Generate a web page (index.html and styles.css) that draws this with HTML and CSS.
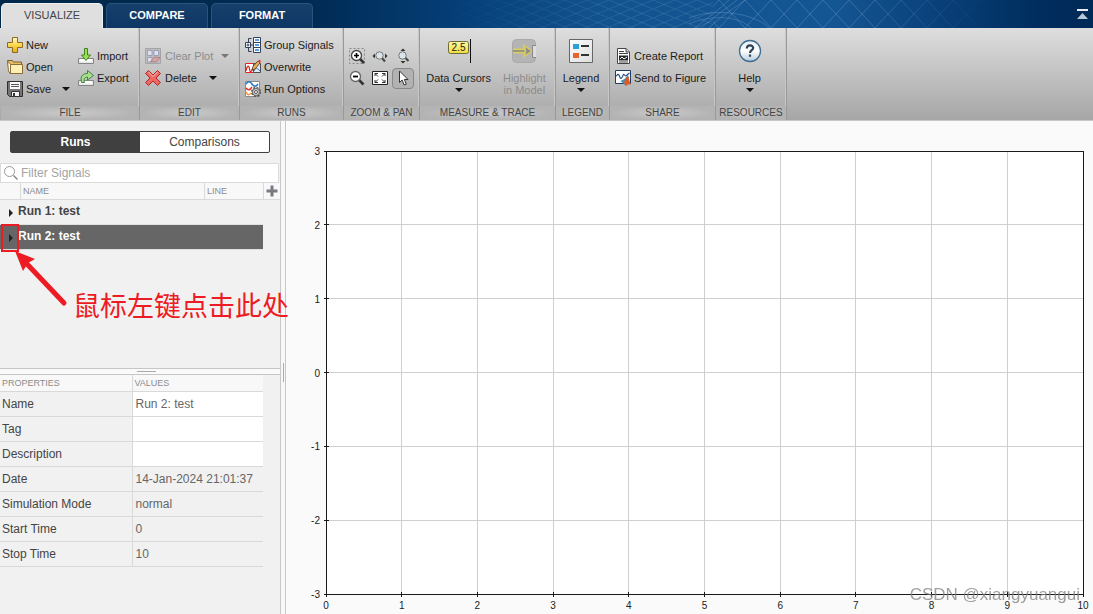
FILE: index.html
```html
<!DOCTYPE html>
<html lang="en">
<head>
<meta charset="utf-8">
<meta name="viewport" content="width=device-width, initial-scale=1">
<title>Simulation Data Inspector</title>
<link rel="stylesheet" href="styles.css">
</head>
<body>
<div class="app">
  <header class="topbar">
    <svg class="topbar-art" width="660" height="28" viewBox="0 0 660 28" preserveAspectRatio="xMaxYMin slice" aria-hidden="true">
      <defs>
        <pattern id="mesh" width="26" height="28" patternUnits="userSpaceOnUse"><path d="M0 0 26 28M26 0 0 28" stroke="#8fb4da" stroke-opacity=".3" fill="none"/></pattern>
        <pattern id="fine" width="22" height="9" patternUnits="userSpaceOnUse"><path d="M0 0 22 9M22 0 0 9" stroke="#8fb4da" stroke-opacity=".17" fill="none"/></pattern>
        <linearGradient id="fade"><stop offset="0" stop-color="#fff" stop-opacity="0"/><stop offset=".3" stop-color="#fff"/><stop offset=".65" stop-color="#fff"/><stop offset=".85" stop-color="#fff" stop-opacity="0"/></linearGradient>
        <mask id="fademask"><rect width="660" height="28" fill="url(#fade)"/></mask>
      </defs>
      <g mask="url(#fademask)">
        <rect x="0" width="280" height="28" fill="url(#fine)"/>
        <rect x="280" width="380" height="28" fill="url(#mesh)"/>
        <path d="M262 28C274 18 286 10 296 0M268 28C282 16 294 8 304 0M276 28C290 14 302 8 312 0M256 18C280 8 320 12 336 28M256 24C280 14 306 16 318 28" stroke="#8fb4da" stroke-opacity=".3" fill="none"/>
      </g>
    </svg>
    <div class="tabs" role="tablist">
      <button class="tab tab-active" role="tab" aria-selected="true">VISUALIZE</button>
      <button class="tab" role="tab">COMPARE</button>
      <button class="tab" role="tab">FORMAT</button>
    </div>
    <button class="collapse" aria-label="Minimize toolstrip">
      <svg width="12" height="11" viewBox="0 0 12 11"><path d="M0 0h11v2H0z" fill="#e8eef4"/><path d="M5.5 4 11 10H0z" fill="#b9c9da"/></svg>
    </button>
  </header>

  <div class="toolstrip">
    <section class="group group-file">
      <div class="group-body">
        <div class="stack stack-first">
          <button class="tool"><svg class="ico" viewBox="0 0 16 16"><defs><linearGradient id="gold" x2="0" y2="1"><stop offset="0" stop-color="#fffbd0"/><stop offset=".5" stop-color="#fbd84a"/><stop offset="1" stop-color="#e8a91d"/></linearGradient></defs><path d="M5.5.5h5v5h5v5h-5v5h-5v-5h-5v-5h5z" fill="url(#gold)" stroke="#8e6a21"/></svg><span>New</span></button>
          <button class="tool"><svg class="ico" viewBox="0 0 16 16"><path d="M.5 1.500h5l1 1.500h8v11H2.500z" fill="#e6bd62" stroke="#7c6230"/><path d="M3.500 14.500v-9h12v9z" fill="#ffefb4" stroke="#8a6d35"/><path d="M.5 2 3.500 5.500v9L1.500 12z" fill="#fff7d6" stroke="#7c6230" stroke-width=".8"/></svg><span>Open</span></button>
          <button class="tool"><svg class="ico" viewBox="0 0 16 16"><path d="M.5.500h15v15h-13l-2-2z" fill="#757575" stroke="#2f2f2f"/><path d="M3 1h10v7H3z" fill="#fafafa"/><path d="M4 3.500h8M4 5.500h8" stroke="#555"/><path d="M4.500 10.500h8v5h-8z" fill="#f4f4f4" stroke="#333"/><path d="M6 12h2v3H6z" fill="#333"/></svg><span>Save</span><i class="caret caret-far"></i></button>
        </div>
        <div class="stack">
          <button class="tool"><svg class="ico" viewBox="0 0 16 16"><path d="M.5 10.500h15v5H.5z" fill="#e8e8e8" stroke="#858585"/><path d="M2 11h12v2.500H2z" fill="#fff"/><path d="M6.500.500h3v6.500h3L8 12.500 3.500 7h3z" fill="#9be04e" stroke="#3e8422"/></svg><span>Import</span></button>
          <button class="tool"><svg class="ico" viewBox="0 0 16 16"><path d="M.5 10.500h15v5H.5z" fill="#e8e8e8" stroke="#858585"/><path d="M2 11h12v2.500H2z" fill="#fff"/><path d="M3.500 12.500C2 6 5 3.500 9.500 3.500v-3l6 5-6 4.500V7C6.500 7 5.500 9 6.500 12.500z" fill="#a9df8b" stroke="#3e8440"/></svg><span>Export</span></button>
        </div>
      </div>
      <h2 class="group-title">FILE</h2>
    </section>

    <section class="group group-edit">
      <div class="group-body">
        <div class="stack">
          <button class="tool tool-wide-text" disabled><svg class="ico" viewBox="0 0 16 16"><path d="M.5.500h15v15H.5z" fill="#bdbdbf" stroke="#a4a4a8"/><path d="M2.500 2.500h4.500v5H2.500zM9 2.500h4.500v5H9zM2.500 9.500h4.500V14H2.500z" fill="#dfe2ec" stroke="#9c9fb5"/><path d="M5.500 13.500 9.500 9l5.500.5-3.500 4.500z" fill="#d9a3a5" stroke="#aa8488"/></svg><span>Clear Plot</span><i class="caret"></i></button>
          <button class="tool tool-wide-text"><svg class="ico" viewBox="0 0 16 16"><path d="M3.500.500 8 5l4.500-4.500 3 3L11 8l4.500 4.500-3 3L8 11l-4.500 4.500-3-3L5 8 .5 3.500z" fill="#ef6762" stroke="#b32826"/><path d="M3.500 2 8 6.500 12.500 2" stroke="#ffc0b8" fill="none"/></svg><span>Delete</span><i class="caret caret-far"></i></button>
        </div>
      </div>
      <h2 class="group-title">EDIT</h2>
    </section>

    <section class="group group-runs">
      <div class="group-body">
        <div class="stack">
          <button class="tool"><svg class="ico" viewBox="0 0 16 16"><path d="M8.500.500h7v15h-7z" fill="#fff" stroke="#33415c"/><path d="M8 5.500h8M8 10.500h8" stroke="#33415c"/><path d="M10 3h4M10 8h4M10 13h4" stroke="#2b79e0" stroke-width="1.500"/><path d="M3.500 5V1.500h3M3.500 11v3.500h3" stroke="#33415c" fill="none"/><path d="M.5 5.500h5v5h-5z" fill="#fff" stroke="#33415c"/><path d="M1.500 8h3M3 6.500v3M5.500 8h3" stroke="#33415c"/></svg><span>Group Signals</span></button>
          <button class="tool"><svg class="ico" viewBox="0 0 16 16"><path d="M.5 4.500h8v9h-8z" fill="#fff" stroke="#e02626"/><path d="M8.500 4.500h7v9h-7z" fill="#dfe9f4" stroke="#474d59"/><path d="M1 12c1-6 3-6 3.500-2s2 3 3 0" stroke="#e02626" stroke-width="1.300" fill="none"/><path d="M9 12c2-4 3-3 6 0" stroke="#3277c6" fill="none"/><path d="m7 11 1-3.500L13 2l2 2-5 6z" fill="#efb15c" stroke="#6b4528"/><path d="m13 2 1.500-1.500L16 2l-1 2z" fill="#d94444"/></svg><span>Overwrite</span></button>
          <button class="tool"><svg class="ico" viewBox="0 0 16 16"><path d="M.5.500h14v15H.5z" fill="#fff" stroke="#8b8b8b"/><path d="M1 3c2-3 4-3 6 0s4 3 6 0" stroke="#2375c4" stroke-width="1.500" fill="none"/><path d="M1 7c2 3 4 2 6-1" stroke="#df382e" stroke-width="1.500" fill="none"/><path d="M1 11c2 4 3 3 5 1" stroke="#ef9730" stroke-width="1.500" fill="none"/><circle cx="11" cy="11" r="4.200" fill="#e6e6e6" stroke="#4a4a4a" stroke-width="1.600" stroke-dasharray="2 1.300"/><circle cx="11" cy="11" r="3.500" fill="#d6d6d6" stroke="#666"/><circle cx="11" cy="11" r="1.500" fill="#fff" stroke="#555"/></svg><span>Run Options</span></button>
        </div>
      </div>
      <h2 class="group-title">RUNS</h2>
    </section>

    <section class="group group-zoom">
      <div class="group-body">
        <div class="zoom-grid">
          <button class="zoom-btn" aria-label="Zoom in"><svg class="ico" viewBox="0 0 16 16"><path d="M.5.500h15v15H.5z" fill="none" stroke="#888" stroke-dasharray="2 2"/><path d="m11 11 4 4" stroke="#333" stroke-width="2.500"/><circle cx="7.500" cy="7.500" r="5" fill="#fff" stroke="#444" stroke-width="1.300"/><path d="M5 7.500h5M7.500 5v5" stroke="#000" stroke-width="1.500"/></svg></button>
          <button class="zoom-btn" aria-label="Zoom in time"><svg class="ico" viewBox="0 0 16 16"><path d="M3 5.500v5L.5 8zM13 5.500v5l2.500-2.500z" fill="#333"/><path d="m10 10 3 3.500" stroke="#444" stroke-width="2"/><circle cx="7.500" cy="7.500" r="3.700" fill="#dce4ea" stroke="#777"/></svg></button>
          <button class="zoom-btn" aria-label="Zoom in Y"><svg class="ico" viewBox="0 0 16 16"><path d="M5.500 3h5L8 .5zM5.500 13h5L8 15.500z" fill="#333"/><path d="m10 9.500 3.500 3.500" stroke="#444" stroke-width="2"/><circle cx="7.500" cy="7.500" r="3.700" fill="#dce4ea" stroke="#777"/></svg></button>
          <button class="zoom-btn" aria-label="Zoom out"><svg class="ico" viewBox="0 0 16 16"><path d="m10 10 4.500 4.500" stroke="#333" stroke-width="2.500"/><circle cx="6.500" cy="6.500" r="5" fill="#fff" stroke="#666" stroke-width="1.300"/><path d="M4 6.500h5" stroke="#000" stroke-width="1.800"/></svg></button>
          <button class="zoom-btn" aria-label="Fit to view"><svg class="ico" viewBox="0 0 16 16"><path d="M.5 1.500h15v13H.5z" fill="#fff" stroke="#222"/><path d="M3 6V3.500h3M10 3.500h3V6M3 10v2.500h3M10 12.500h3V10M3 3.500l3 3M13 3.500l-3 3M3 12.500l3-3M13 12.500l-3-3" stroke="#333" fill="none"/></svg></button>
          <button class="zoom-btn zoom-btn-on" aria-label="Select"><svg class="ico" viewBox="0 0 16 16"><path d="M4.500 1v11.500l2.600-2.500 2 5 2.200-.900-2-4.600h3.700z" fill="#fff" stroke="#333"/></svg></button>
        </div>
      </div>
      <h2 class="group-title">ZOOM &amp; PAN</h2>
    </section>

    <section class="group group-measure">
      <div class="group-body group-body-big">
        <button class="big"><svg class="big-ico" viewBox="0 0 24 28"><defs><linearGradient id="yel" x2="0" y2="1"><stop offset="0" stop-color="#fff9a0"/><stop offset="1" stop-color="#f0dc3c"/></linearGradient></defs><path d="M23.500 2v24" stroke="#111"/><rect x="1.500" y="4.500" width="20" height="12" rx="2" fill="url(#yel)" stroke="#6d6a3a"/><text class="cursor-value" x="11.500" y="14" text-anchor="middle">2.5</text></svg><span>Data Cursors</span><i class="caret"></i></button>
        <button class="big" disabled><svg class="big-ico" viewBox="0 0 24 28"><rect x=".5" y="2.500" width="23" height="23" rx="4" fill="#b4b4b4" stroke="#a9a9a9"/><path d="M1 14h13" stroke="#d9cd62" stroke-width="5"/><path d="M1 14h14" stroke="#858585" stroke-width="1.500"/><path d="m12 8.500 8 5.500-8 5.500 1.500-5.500z" fill="#8b8b8b" stroke="#d9cd62" stroke-width="1.500"/><path d="M24 8.500h-3.500v12H24" fill="#ddd" stroke="#888"/></svg><span>Highlight<br>in Model</span></button>
      </div>
      <h2 class="group-title">MEASURE &amp; TRACE</h2>
    </section>

    <section class="group group-legend">
      <div class="group-body group-body-big">
        <button class="big"><svg class="big-ico" viewBox="0 0 24 28"><defs><linearGradient id="panel" x2="1" y2="1"><stop offset="0" stop-color="#fff"/><stop offset="1" stop-color="#dcdcdc"/></linearGradient></defs><path d="M.5 2.500h23v23H.5z" fill="url(#panel)" stroke="#666"/><path d="M4 7h6v5H4z" fill="#2ba3d6"/><path d="M4 16h6v5H4z" fill="#e5652d"/><path d="M12 9h8M12 18h8" stroke="#333" stroke-width="2"/></svg><span>Legend</span><i class="caret"></i></button>
      </div>
      <h2 class="group-title">LEGEND</h2>
    </section>

    <section class="group group-share">
      <div class="group-body">
        <div class="stack">
          <button class="tool"><svg class="ico" viewBox="0 0 16 16"><path d="M2.500.500H11l3.500 3.500v11.500h-12z" fill="#fff" stroke="#444"/><path d="M11 .5V4h3.500" fill="#ccc" stroke="#444"/><path d="M4 3.500h5M4 5.500h9M4 14h9" stroke="#444"/><path d="M4 7.500h9v5H4z" fill="#222"/><path d="m5 11 2-2 2 2 3-2" stroke="#fff" fill="none"/></svg><span>Create Report</span></button>
          <button class="tool"><svg class="ico" viewBox="0 0 16 16"><path d="M.5.500h15v13H.5z" fill="#fff" stroke="#1c3e6e"/><path d="M1 6c1 0 2-3 3-1s1 4 2.500 3S8 3 9.500 5s2 0 5-2" stroke="#234f88" fill="none" stroke-width="1.200"/><path d="m5.500 11 4-2 3.500-4 1 4-4 6z" fill="#3f91bb"/><path d="m9 12 4-7c1 4 2 8 3 10-3-2-4 1-5.500 1z" fill="#dd5a24"/></svg><span>Send to Figure</span></button>
        </div>
      </div>
      <h2 class="group-title">SHARE</h2>
    </section>

    <section class="group group-resources">
      <div class="group-body group-body-big">
        <button class="big"><svg class="big-ico" viewBox="0 0 24 28"><defs><linearGradient id="orb" x2="0" y2="1"><stop offset="0" stop-color="#e4edf4"/><stop offset=".5" stop-color="#fff"/><stop offset="1" stop-color="#b6cad9"/></linearGradient></defs><circle cx="12" cy="14" r="10.500" fill="url(#orb)" stroke="#3f6c92" stroke-width="1.300"/><path d="M8.800 11.500c0-4 6.400-4 6.400-.500 0 2.200-3.200 2.300-3.200 5M12 17.600v2.200" stroke="#2f4257" stroke-width="2.200" fill="none"/></svg><span>Help</span><i class="caret"></i></button>
      </div>
      <h2 class="group-title">RESOURCES</h2>
    </section>
  </div>

  <div class="workspace">
    <aside class="sidebar">
      <div class="signals">
        <div class="switch" role="tablist">
          <button class="switch-item switch-on" role="tab" aria-selected="true">Runs</button>
          <button class="switch-item" role="tab">Comparisons</button>
        </div>
        <label class="filter">
          <svg width="16" height="16" viewBox="0 0 16 16" aria-hidden="true"><circle cx="6.500" cy="6.500" r="5" fill="none" stroke="#999"/><path d="m10.500 10.500 4 4" stroke="#888" stroke-width="1.500"/></svg>
          <input class="filter-input" type="text" placeholder="Filter Signals" aria-label="Filter Signals">
        </label>
        <div class="cols">
          <span class="col-pad"></span><span class="col-name">NAME</span><span class="col-line">LINE</span>
          <button class="col-add" aria-label="Add column"><svg width="12" height="12" viewBox="0 0 12 12"><path d="M4.500.500h3v4h4v3h-4v4h-3v-4h-4v-3h4z" fill="#777b80"/></svg></button>
        </div>
        <ul class="runs">
          <li class="run"><i class="twisty"></i>Run 1: test</li>
          <li class="run run-selected"><i class="twisty"></i>Run 2: test<span class="mark"></span>
            <svg class="mark-arrow" width="54" height="60" viewBox="0 0 54 60" aria-hidden="true"><path d="m12 14 37 39" stroke="#ed1c24" stroke-width="5" stroke-linecap="round"/><path d="M0 1 20 9l-7 4-5 8z" fill="#ed1c24"/></svg>
            <span class="mark-text" lang="zh">鼠标左键点击此处</span>
          </li>
        </ul>
      </div>
      <div class="split-h"></div>
      <div class="properties">
        <table class="props">
          <thead><tr><th class="prop-key">PROPERTIES</th><th>VALUES</th></tr></thead>
          <tbody>
            <tr><td><label for="p-name">Name</label></td><td class="editable"><input class="prop-input" id="p-name" type="text" value="Run 2: test"></td></tr>
            <tr><td><label for="p-tag">Tag</label></td><td class="editable"><input class="prop-input" id="p-tag" type="text"></td></tr>
            <tr><td><label for="p-desc">Description</label></td><td class="editable"><input class="prop-input" id="p-desc" type="text"></td></tr>
            <tr><td>Date</td><td class="value">14-Jan-2024 21:01:37</td></tr>
            <tr><td>Simulation Mode</td><td class="value">normal</td></tr>
            <tr><td>Start Time</td><td class="value">0</td></tr>
            <tr><td>Stop Time</td><td class="value">10</td></tr>
          </tbody>
        </table>
      </div>
    </aside>
    <div class="split-v"></div>
    <main class="canvas">
      <svg class="plot" role="img" aria-label="Empty time plot">
        <rect width="100%" height="100%" fill="#fff"/>
        <g class="grid">
          <line x1="10%" x2="10%" y2="100%"/><line x1="20%" x2="20%" y2="100%"/><line x1="30%" x2="30%" y2="100%"/><line x1="40%" x2="40%" y2="100%"/><line x1="50%" x2="50%" y2="100%"/><line x1="60%" x2="60%" y2="100%"/><line x1="70%" x2="70%" y2="100%"/><line x1="80%" x2="80%" y2="100%"/><line x1="90%" x2="90%" y2="100%"/>
          <line y1="16.667%" y2="16.667%" x2="100%"/><line y1="33.333%" y2="33.333%" x2="100%"/><line y1="50%" y2="50%" x2="100%"/><line y1="66.667%" y2="66.667%" x2="100%"/><line y1="83.333%" y2="83.333%" x2="100%"/>
        </g>
        <rect class="frame" width="100%" height="100%"/>
        <g class="ticks">
          <line x1="-2" x2="3" y1="0" y2="0"/><line x1="-2" x2="3" y1="16.667%" y2="16.667%"/><line x1="-2" x2="3" y1="33.333%" y2="33.333%"/><line x1="-2" x2="3" y1="50%" y2="50%"/><line x1="-2" x2="3" y1="66.667%" y2="66.667%"/><line x1="-2" x2="3" y1="83.333%" y2="83.333%"/><line x1="-2" x2="3" y1="100%" y2="100%"/>
        </g>
        <svg y="100%" height="4" class="xticks">
          <g class="ticks"><line x1="0" x2="0" y1="-2" y2="3"/><line x1="10%" x2="10%" y1="-2" y2="3"/><line x1="20%" x2="20%" y1="-2" y2="3"/><line x1="30%" x2="30%" y1="-2" y2="3"/><line x1="40%" x2="40%" y1="-2" y2="3"/><line x1="50%" x2="50%" y1="-2" y2="3"/><line x1="60%" x2="60%" y1="-2" y2="3"/><line x1="70%" x2="70%" y1="-2" y2="3"/><line x1="80%" x2="80%" y1="-2" y2="3"/><line x1="90%" x2="90%" y1="-2" y2="3"/><line x1="100%" x2="100%" y1="-2" y2="3"/></g>
        </svg>
        <g class="ylabels">
          <text x="-6" y="0" dy="4">3</text><text x="-6" y="16.667%" dy="4">2</text><text x="-6" y="33.333%" dy="4">1</text><text x="-6" y="50%" dy="4">0</text><text x="-6" y="66.667%" dy="4">-1</text><text x="-6" y="83.333%" dy="4">-2</text><text x="-6" y="100%" dy="4">-3</text>
        </g>
        <g class="xlabels">
          <text x="0" y="100%" dy="15">0</text><text x="10%" y="100%" dy="15">1</text><text x="20%" y="100%" dy="15">2</text><text x="30%" y="100%" dy="15">3</text><text x="40%" y="100%" dy="15">4</text><text x="50%" y="100%" dy="15">5</text><text x="60%" y="100%" dy="15">6</text><text x="70%" y="100%" dy="15">7</text><text x="80%" y="100%" dy="15">8</text><text x="90%" y="100%" dy="15">9</text><text x="100%" y="100%" dy="15">10</text>
        </g>
      </svg>
      <span class="watermark">CSDN @xiangyuangui</span>
    </main>
  </div>
</div>
</body>
</html>
```

FILE: styles.css
```css
* { box-sizing: border-box; }
body {
  margin: 0;
  font-family: "Liberation Sans", Arial, "Noto Sans CJK SC", sans-serif;
  font-size: 12px;
  color: #444;
}
button {
  font: inherit;
  color: inherit;
  background: none;
  border: 0;
  padding: 0;
}
svg { display: block; flex: none; }
.app { display: flex; flex-direction: column; height: 100vh; min-height: 480px; overflow: hidden; }

/* Title bar */
.topbar {
  position: relative;
  display: flex;
  justify-content: space-between;
  align-items: flex-end;
  height: 28px;
  flex: none;
  padding: 0 4px 0 1px;
  background: linear-gradient(90deg, #00284a 0%, #002a52 28%, #053f78 42%, #12528f 55%, #145694 76%, #0a427c 85%, #002d5e 95%, #002a57 100%);
}
.topbar-art { position: absolute; top: 0; right: 0; }
.tabs { position: relative; display: flex; gap: 3px; }
.tab {
  width: 102px;
  height: 25px;
  padding-bottom: 3px;
  font-size: 11px;
  font-weight: bold;
  color: #fff;
  background: linear-gradient(#163f6b, #0e3765);
  border: 1px solid #2b547d;
  border-bottom: 0;
  border-radius: 5px 5px 0 0;
}
.tab-active { background: #dfdfdf; border-color: #f0f0f0; color: #444; font-weight: normal; }
.collapse { position: relative; align-self: center; }

/* Toolstrip */
.toolstrip {
  display: flex;
  flex: none;
  height: 93px;
  padding-left: 1px;
  border-bottom: 1px solid #c8c8c8;
  background: linear-gradient(#dedede, #a6a6a6);
}
.group { display: flex; flex-direction: column; flex: none; border-right: 1px solid #999; box-shadow: inset -1px 0 #c8c8c8; }
.group-file { width: 139px; }
.group-edit { width: 100px; }
.group-runs { width: 104px; }
.group-zoom { width: 76px; }
.group-measure { width: 136px; }
.group-legend { width: 54px; }
.group-share { width: 106px; }
.group-resources { width: 71px; }
.group-body { display: flex; flex: 1; align-items: center; padding-left: 5px; }
.group-file .group-body { padding-left: 6px; }
.group-zoom .group-body { padding-left: 2px; }
.group-body-big { align-items: flex-start; justify-content: center; gap: 12px; padding: 9px 3px 0 0; }
.group-title {
  margin: 0;
  height: 14px;
  line-height: 14px;
  font-size: 10px;
  font-weight: normal;
  text-align: center;
  color: #444;
  background: radial-gradient(closest-side, #c9c9c9, #b3b3b3);
}
.stack { display: flex; flex-direction: column; }
.stack-first { width: 71px; }
.tool { display: flex; align-items: center; gap: 3px; height: 22px; font-size: 11px; color: #1c1c1c; white-space: nowrap; }
.tool-wide-text { gap: 4px; }
.ico { width: 16px; height: 16px; }
.caret { flex: none; border: 4px solid transparent; border-top: 4px solid #111; border-bottom: 0; margin-left: 4px; }
.caret-far { margin-left: 8px; }
.tool:disabled, .big:disabled { color: #8c8c8c; }
.tool:disabled .caret { border-top-color: #777; }
.zoom-grid { display: grid; grid-template-columns: repeat(3, 22px); gap: 1px; }
.zoom-btn { display: flex; align-items: center; justify-content: center; height: 21px; }
.zoom-btn-on { border: 1px solid #888; border-radius: 4px; background: #b2b2b2; }
.big { display: flex; flex-direction: column; align-items: center; font-size: 11px; line-height: 12px; color: #1c1c1c; }
.big-ico { width: 24px; height: 28px; margin-bottom: 7px; }
.big .caret { margin: 4px 0 0; }
.cursor-value { font-size: 10px; fill: #222; }

/* Workspace */
.workspace { display: flex; flex: 1; min-height: 0; background: #f1f1f1; }
.sidebar { display: flex; flex-direction: column; flex: none; width: 281px; border-right: 1px solid #c8c8c8; }
.signals { flex: 1; padding-top: 10px; }
.switch { display: flex; height: 22px; margin: 0 10px 10px; border: 1px solid #404040; border-radius: 2px; background: #fff; }
.switch-item { flex: 1; color: #444; }
.switch-on { background: #404040; color: #fff; font-weight: bold; }
.filter { display: flex; align-items: center; gap: 2px; height: 20px; margin-right: 1px; padding-left: 2px; background: #fff; border: 1px solid #dcdcdc; }
.filter-input { flex: 1; min-width: 0; height: 18px; padding: 0; border: 0; outline: 0; background: none; font: inherit; }
.filter-input::placeholder { color: #a3a3a3; opacity: 1; }
.cols { display: flex; height: 17px; line-height: 16px; font-size: 9px; color: #8c8c8c; background: #f8f8f8; border-bottom: 1px solid #d9d9d9; }
.cols > span { border-right: 1px solid #d9d9d9; padding-left: 2px; }
.col-pad { width: 21px; }
.col-name { flex: 1; }
.col-line { width: 59px; }
.col-add { display: flex; align-items: center; justify-content: center; width: 16px; }
.runs { list-style: none; margin: 0 17px 0 0; padding: 0; }
.run { position: relative; display: flex; align-items: center; gap: 5px; height: 25px; padding: 0 0 2px 9px; font-weight: bold; border-bottom: 1px solid #e0e0e0; }
.run-selected { background: #666; color: #fff; }
.twisty { border: 4px solid transparent; border-left-color: #222; border-right: 0; margin-top: 3px; }

/* Callout laid over the run list */
.mark { position: absolute; left: 1px; top: -1px; width: 18px; height: 28px; border: 2px solid #ed1c24; }
.mark-arrow { position: absolute; left: 15px; top: 25px; }
.mark-text { position: absolute; left: 73px; top: 60px; z-index: 2; font-family: "Noto Sans CJK SC", sans-serif; font-size: 27px; line-height: 40px; font-weight: 400; color: #ed1c24; white-space: nowrap; }

.split-h { flex: none; height: 7px; border: solid #c6c6c6; border-width: 1px 0; background: linear-gradient(#aaa, #aaa) 137px 2px / 19px 1px no-repeat #fafafa; }
.split-v { flex: none; width: 5px; border-right: 1px solid #c6c6c6; background: linear-gradient(#aaa, #aaa) 2px 51% / 1px 19px no-repeat #f8f8f8; }
.properties { flex: none; padding-bottom: 47px; }
.props { width: 263px; border-collapse: collapse; table-layout: fixed; }
.props th { height: 17px; padding: 0 2px; font-size: 9px; font-weight: normal; text-align: left; color: #8c8c8c; background: #f8f8f8; border-bottom: 1px solid #d9d9d9; }
.props .prop-key { width: 132px; }
.props td { height: 25px; padding: 0 2px; border-bottom: 1px solid #d9d9d9; }
.props th:first-child, .props td:first-child { border-right: 1px solid #d9d9d9; }
.props .value, .props .editable { padding-left: 3px; color: #666; }
.props .editable { background: #fff; }
.prop-input { display: block; width: 100%; height: 22px; padding: 0; border: 0; outline: 0; background: none; font: inherit; color: #666; }

/* Plot */
.canvas { position: relative; display: flex; flex: 1; min-width: 0; padding: 30px 10px 20px 40px; background: #fafafa; }
.plot { flex: 1; min-width: 0; height: 100%; overflow: visible; }
.xticks { overflow: visible; }
.grid line { stroke: #cfcfcf; shape-rendering: crispEdges; }
.frame { fill: none; stroke: #1a1a1a; shape-rendering: crispEdges; }
.ticks line { stroke: #1a1a1a; shape-rendering: crispEdges; }
.ylabels text, .xlabels text { font-size: 10px; fill: #222; }
.ylabels text { text-anchor: end; }
.xlabels text { text-anchor: middle; }
.watermark { position: absolute; right: 13px; bottom: 9px; font-size: 17px; line-height: 20px; color: #808080; opacity: .75; }
```
